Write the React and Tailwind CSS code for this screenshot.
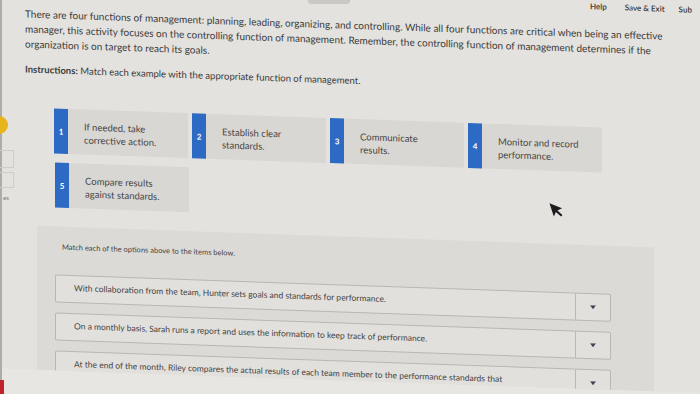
const cards = [
  { n: 1, lines: ['If needed, take', 'corrective action.'] },
  { n: 2, lines: ['Establish clear', 'standards.'] },
  { n: 3, lines: ['Communicate', 'results.'] },
  { n: 4, lines: ['Monitor and record', 'performance.'] },
];

const items = [
  'With collaboration from the team, Hunter sets goals and standards for performance.',
  'On a monthly basis, Sarah runs a report and uses the information to keep track of performance.',
  'At the end of the month, Riley compares the actual results of each team member to the performance standards that',
];

const Card = ({ n, lines }) => (
  <div className="flex h-[45px] w-[134px]">
    <div className="flex w-[14px] shrink-0 items-center justify-center bg-[#2c6ac3] text-[8px] font-bold text-white">
      {n}
    </div>
    <div className="flex flex-1 flex-col justify-center bg-[#d9d7d3] pl-[16px] pt-[4px] text-[9.5px] leading-[12.5px] text-[#474747]">
      {lines.map((l) => (
        <span key={l} className="whitespace-nowrap">{l}</span>
      ))}
    </div>
  </div>
);

const MatchRow = ({ text }) => (
  <div className="flex h-[28px] w-[556px] shrink-0 rounded-[2px] border border-[#b9b7b2] bg-[#e2e0dc]">
    <div className="flex flex-1 items-center overflow-hidden whitespace-nowrap pl-[18px] text-[8.5px] text-[#434343]">
      {text}
    </div>
    <div className="flex w-[35px] items-center justify-center border-l border-[#b9b7b2]">
      <svg width="6" height="4" viewBox="0 0 6 4">
        <path d="M0 0h6L3 4z" fill="#3d4350" />
      </svg>
    </div>
  </div>
);

export default function App() {
  return (
    <div className="relative h-[394px] w-[700px] overflow-hidden bg-[#e4e2de] font-['Lato',sans-serif] text-[#3b3b3b]">
      <div className="w-[700px] origin-top-right skew-y-2">
        {/* top bar */}
        <div className="mt-[4px] flex h-[11px] items-center whitespace-nowrap pl-[590px] text-[8px] font-semibold text-[#333]">
          <span>Help</span>
          <span className="ml-[18px]">Save &amp; Exit</span>
          <span className="ml-[14px]">Sub</span>
        </div>

        {/* intro */}
        <div className="mt-[14.5px] whitespace-nowrap pl-[25px] text-[10px] leading-[15px]">
          <p>
            There are four functions of management: planning, leading, organizing, and controlling. While all four functions are critical when being an effective
          </p>
          <p>
            manager, this activity focuses on the controlling function of management. Remember, the controlling function of management determines if the
          </p>
          <p>organization is on target to reach its goals.</p>
          <p className="mt-[10.5px] text-[9.5px]">
            <span className="font-bold">Instructions:</span> Match each example with the appropriate function of management.
          </p>
        </div>

        {/* options */}
        <div className="mt-[31px] flex flex-col gap-[9px] pl-[54px]">
          <div className="flex gap-[4px]">
            {cards.map((c) => (
              <Card key={c.n} {...c} />
            ))}
          </div>
          <div className="pl-[1px]">
            <Card n={5} lines={['Compare results', 'against standards.']} />
          </div>
        </div>

        {/* match panel */}
        <div className="ml-[37px] mt-[19px] h-[144px] w-[617px] overflow-hidden bg-[#dcdad6]">
          <p className="pl-[25px] pt-[15.5px] text-[7.5px] leading-[10px] text-[#444]">
            Match each of the options above to the items below.
          </p>
          <div className="mt-[22px] flex flex-col gap-[10px] pl-[18px]">
            {items.map((t) => (
              <MatchRow key={t} text={t} />
            ))}
          </div>
        </div>
        <div className="h-[40px] bg-[#e8e6e2]" />
      </div>

      {/* edge of the neighbouring window */}
      <div className="absolute left-0 top-0 h-full w-[2px] bg-[#aeaca8]" />
      <div className="absolute left-[-10px] top-[116px] h-[18px] w-[18px] rounded-full bg-[#e7b41c]" />
      <div className="absolute left-[-2px] top-[150px] h-[18px] w-[16px] border border-[#cfcdc9]" />
      <div className="absolute left-[-2px] top-[172px] h-[16px] w-[16px] border border-[#cfcdc9]" />
      <span className="absolute left-[3px] top-[193px] text-[6px] text-[#777]">es</span>
      <div className="absolute bottom-0 left-0 h-[14px] w-[4px] bg-[#c0242a]" />
      <div className="absolute left-[308px] top-0 h-[4px] w-[42px] rounded-b-[3px] bg-[#cac8c4]" />

      {/* mouse pointer */}
      <svg className="absolute left-[549px] top-[201px]" width="14" height="18" viewBox="0 0 14 18">
        <path d="M2 1l1.5 14 3-4 4 5.5 1.8-1.3-4-5.5 5-1.2z" fill="#1d1d1f" transform="rotate(-12 7 9)" />
      </svg>
    </div>
  );
}
